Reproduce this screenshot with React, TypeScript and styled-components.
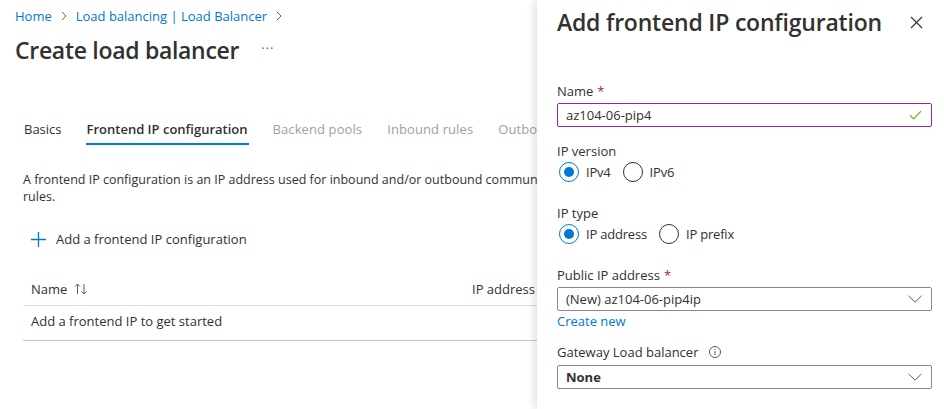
import React from "react";
import styled, { createGlobalStyle } from "styled-components";

const Global = createGlobalStyle`
  html, body { margin: 0; padding: 0; background: #fff; }
  body { font-family: "Segoe UI", "Open Sans", "Noto Sans", sans-serif; color: #323130; }
  * { box-sizing: border-box; }
`;

const Page = styled.div`
  display: flex;
  width: 944px;
  height: 409px;
  overflow: hidden;
  background: #fff;
`;

const Main = styled.div`
  flex: 1;
  min-width: 0;
  display: flex;
  flex-direction: column;
  overflow: hidden;
`;

const Breadcrumb = styled.nav`
  display: flex;
  align-items: center;
  gap: 6px;
  height: 20px;
  margin: 6px 0 0 15px;
  font-size: 13px;
`;

const Crumb = styled.a`
  color: #0078d4;
  text-decoration: none;
`;

const Chevron = styled.svg`
  width: 12px;
  height: 12px;
  color: #605e5c;
`;

const TitleRow = styled.div`
  display: flex;
  align-items: center;
  height: 32px;
  margin: 8px 0 0 15px;
  gap: 22px;
`;

const PageTitle = styled.h1`
  margin: 0;
  font-size: 23px;
  font-weight: 600;
  color: #323130;
  letter-spacing: -0.3px;
`;

const More = styled.span`
  font-size: 13px;
  color: #605e5c;
  letter-spacing: 1px;
  margin-top: -4px;
`;

const Tabs = styled.div`
  display: flex;
  gap: 23px;
  margin: 48px 0 0 23px;
  height: 31px;
`;

const Tab = styled.div<{ $active?: boolean; $disabled?: boolean }>`
  flex: none;
  font-size: 13px;
  line-height: 30px;
  padding: 0 1px;
  white-space: nowrap;
  font-weight: ${(p) => (p.$active ? 600 : 400)};
  color: ${(p) => (p.$disabled ? "#a19f9d" : "#323130")};
  border-bottom: 2px solid ${(p) => (p.$active ? "#0078d4" : "transparent")};
  letter-spacing: ${(p) => (p.$disabled ? "0.1px" : "0")};
`;

const Description = styled.p`
  margin: 26px 0 0 23px;
  font-size: 12.5px;
  line-height: 17px;
  white-space: nowrap;
`;

const AddButton = styled.div`
  display: flex;
  align-items: center;
  gap: 10px;
  margin: 24px 0 0 31px;
  height: 20px;
  font-size: 13px;
`;

const Table = styled.div`
  display: flex;
  flex-direction: column;
  margin: 20px 0 0 23px;
  width: 560px;
`;

const HeaderRow = styled.div`
  display: grid;
  grid-template-columns: 441px 1fr;
  height: 37px;
  align-items: center;
  padding: 3px 8px 0;
  font-size: 13px;
  border-bottom: 1px solid #e1dfdd;
`;

const HeaderCell = styled.div`
  display: flex;
  align-items: center;
  gap: 7px;
  white-space: nowrap;
`;

const BodyRow = styled.div`
  height: 35px;
  display: flex;
  align-items: center;
  padding: 0 8px 4px;
  font-size: 13px;
  border-bottom: 1px solid #c8c6c4;
`;

const Panel = styled.aside`
  position: relative;
  z-index: 1;
  flex: none;
  width: 407px;
  height: 409px;
  background: #fff;
  box-shadow: -3px 0 8px rgba(0, 0, 0, 0.12);
  padding: 0 12px 0 20px;
  display: flex;
  flex-direction: column;
`;

const PanelHeader = styled.div`
  display: flex;
  align-items: center;
  justify-content: space-between;
  height: 32px;
  margin-top: 6px;
`;

const PanelTitle = styled.h2`
  margin: 0;
  font-size: 23px;
  font-weight: 600;
  color: #323130;
  letter-spacing: -0.2px;
`;

const Close = styled.svg`
  width: 13px;
  height: 13px;
  margin-right: 9px;
  color: #323130;
`;

const Label = styled.div<{ $top: number }>`
  display: flex;
  align-items: center;
  gap: 4px;
  height: 20px;
  line-height: 20px;
  margin-top: ${(p) => p.$top}px;
  font-size: 13px;
  color: #323130;
`;

const Req = styled.span`
  color: #a4262c;
`;

const Input = styled.div<{ $top: number; $focus?: boolean }>`
  display: flex;
  align-items: center;
  justify-content: space-between;
  height: 24px;
  margin-top: ${(p) => p.$top}px;
  padding: 0 9px 0 8px;
  border: 1px solid ${(p) => (p.$focus ? "#8a2da5" : "#8a8886")};
  border-radius: 2px;
  font-size: 13px;
  line-height: 20px;
  color: #323130;
`;

const Bold = styled.span`
  font-weight: 700;
`;

const RadioRow = styled.div`
  display: flex;
  align-items: center;
  height: 20px;
  margin-top: 1px;
  gap: 10px;
  font-size: 13px;
  letter-spacing: -0.2px;
`;

const RadioOption = styled.label`
  display: flex;
  align-items: center;
  gap: 7px;
  height: 20px;
`;

const RadioText = styled.span`
  display: block;
  line-height: 18px;
`;

const RadioCircle = styled.span<{ $checked?: boolean }>`
  flex: none;
  width: 20px;
  height: 20px;
  border-radius: 50%;
  margin-left: 2px;
  border: 1px solid ${(p) => (p.$checked ? "#0078d4" : "#323130")};
  display: flex;
  align-items: center;
  justify-content: center;
  &::after {
    content: "";
    width: 10px;
    height: 10px;
    border-radius: 50%;
    background: ${(p) => (p.$checked ? "#0078d4" : "transparent")};
  }
`;

const Link = styled.a`
  height: 20px;
  line-height: 20px;
  font-size: 13px;
  color: #0078d4;
  text-decoration: none;
`;

const ChevronDown = () => (
  <svg width="14" height="8" viewBox="0 0 14 8" fill="none">
    <path d="M0.5 0.8L7 7.2L13.5 0.8" stroke="#605e5c" strokeWidth="1" />
  </svg>
);

const Radio = ({ label, checked }: { label: string; checked?: boolean }) => (
  <RadioOption>
    <RadioCircle $checked={checked} />
    <RadioText>{label}</RadioText>
  </RadioOption>
);

export default function App() {
  return (
    <Page>
      <Global />
      <Main>
        <Breadcrumb>
          <Crumb>Home</Crumb>
          <Chevron viewBox="0 0 12 12">
            <path d="M4 2l4 4-4 4" stroke="currentColor" fill="none" strokeWidth="1" />
          </Chevron>
          <Crumb>Load balancing | Load Balancer</Crumb>
          <Chevron viewBox="0 0 12 12">
            <path d="M4 2l4 4-4 4" stroke="currentColor" fill="none" strokeWidth="1" />
          </Chevron>
        </Breadcrumb>
        <TitleRow>
          <PageTitle>Create load balancer</PageTitle>
          <More>···</More>
        </TitleRow>
        <Tabs>
          <Tab>Basics</Tab>
          <Tab $active>Frontend IP configuration</Tab>
          <Tab $disabled>Backend pools</Tab>
          <Tab $disabled>Inbound rules</Tab>
          <Tab $disabled>Outbound rules</Tab>
        </Tabs>
        <Description>
          A frontend IP configuration is an IP address used for inbound and/or outbound communication as defined
          within load balancing, inbound NAT, and outbound
          <br />
          rules.
        </Description>
        <AddButton>
          <svg width="15" height="15" viewBox="0 0 15 15">
            <path d="M7.5 0v15M0 7.5h15" stroke="#0078d4" strokeWidth="1.3" />
          </svg>
          Add a frontend IP configuration
        </AddButton>
        <Table>
          <HeaderRow>
            <HeaderCell>
              Name
              <svg width="14" height="12" viewBox="0 0 14 12" fill="none">
                <path d="M3.5 11V1M1 3.5L3.5 1L6 3.5" stroke="#605e5c" strokeWidth="1" />
                <path d="M10 1v10M7.5 8.5L10 11l2.5-2.5" stroke="#605e5c" strokeWidth="1" />
              </svg>
            </HeaderCell>
            <HeaderCell>IP address</HeaderCell>
          </HeaderRow>
          <BodyRow>Add a frontend IP to get started</BodyRow>
        </Table>
      </Main>

      <Panel>
        <PanelHeader>
          <PanelTitle>Add frontend IP configuration</PanelTitle>
          <Close viewBox="0 0 13 13">
            <path d="M1 1l11 11M12 1L1 12" stroke="currentColor" strokeWidth="1.1" />
          </Close>
        </PanelHeader>

        <Label $top={43}>
          Name <Req>*</Req>
        </Label>
        <Input $top={2} $focus>
          az104-06-pip4
          <svg width="13" height="10" viewBox="0 0 13 10" fill="none">
            <path d="M1 5.2L4.6 8.8L12 1.2" stroke="#6bb700" strokeWidth="1.2" />
          </svg>
        </Input>

        <Label $top={14}>IP version</Label>
        <RadioRow>
          <Radio label="IPv4" checked />
          <Radio label="IPv6" />
        </RadioRow>

        <Label $top={21}>IP type</Label>
        <RadioRow>
          <Radio label="IP address" checked />
          <Radio label="IP prefix" />
        </RadioRow>

        <Label $top={21}>
          Public IP address <Req>*</Req>
        </Label>
        <Input $top={2}>
          (New) az104-06-pip4ip
          <ChevronDown />
        </Input>
        <Link>Create new</Link>

        <Label $top={11}>
          Gateway Load balancer
          <svg width="14" height="14" viewBox="0 0 14 14" fill="none" style={{ marginLeft: 6 }}>
            <circle cx="7" cy="7" r="5.5" stroke="#605e5c" strokeWidth="1" />
            <path d="M7 6v4" stroke="#605e5c" strokeWidth="1" />
            <circle cx="7" cy="4.3" r="0.7" fill="#605e5c" />
          </svg>
        </Label>
        <Input $top={3}>
          <Bold>None</Bold>
          <ChevronDown />
        </Input>
      </Panel>
    </Page>
  );
}
